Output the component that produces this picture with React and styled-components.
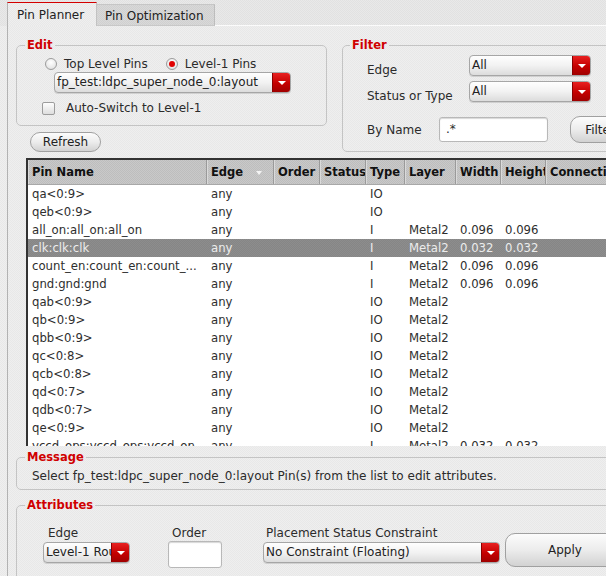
import React from "react";
import styled, { createGlobalStyle, css } from "styled-components";

const GlobalStyle = createGlobalStyle`
  html, body {
    margin: 0;
    padding: 0;
    overflow: hidden;
    background: #ececec;
  }
  body {
    font-family: "DejaVu Sans", "Noto Sans", sans-serif;
    font-size: 12px;
    color: #2b2b2b;
  }
  * {
    box-sizing: border-box;
  }
`;

// dithered background like the old X11 theme
const stipple = (a, b) => css`
  background-color: ${a};
  background-image: repeating-conic-gradient(${a} 0 25%, ${b} 0 50%);
  background-size: 2px 2px;
`;

const pins = [
  ["qa<0:9>", "any", "", "", "IO", "", "", ""],
  ["qeb<0:9>", "any", "", "", "IO", "", "", ""],
  ["all_on:all_on:all_on", "any", "", "", "I", "Metal2", "0.096", "0.096"],
  ["clk:clk:clk", "any", "", "", "I", "Metal2", "0.032", "0.032"],
  ["count_en:count_en:count_...", "any", "", "", "I", "Metal2", "0.096", "0.096"],
  ["gnd:gnd:gnd", "any", "", "", "I", "Metal2", "0.096", "0.096"],
  ["qab<0:9>", "any", "", "", "IO", "Metal2", "", ""],
  ["qb<0:9>", "any", "", "", "IO", "Metal2", "", ""],
  ["qbb<0:9>", "any", "", "", "IO", "Metal2", "", ""],
  ["qc<0:8>", "any", "", "", "IO", "Metal2", "", ""],
  ["qcb<0:8>", "any", "", "", "IO", "Metal2", "", ""],
  ["qd<0:7>", "any", "", "", "IO", "Metal2", "", ""],
  ["qdb<0:7>", "any", "", "", "IO", "Metal2", "", ""],
  ["qe<0:9>", "any", "", "", "IO", "Metal2", "", ""],
  ["vccd_ops:vccd_ops:vccd_on", "any", "", "", "I", "Metal2", "0.032", "0.032"],
];

const columns = ["Pin Name", "Edge", "Order", "Status", "Type", "Layer", "Width", "Height", "Connection"];
const colTemplate = "179px 67px 46px 46px 39px 51px 45px 45px 130px";

export default function App() {
  return (
    <>
      <GlobalStyle />
      <Frame>
        <TabBar>
          <Tab $active>Pin Planner</Tab>
          <Tab>Pin Optimization</Tab>
          <TabFiller />
        </TabBar>

        <Panel>
          <TopArea>
            <div>
              <Group $w={311}>
                <Legend>Edit</Legend>
                <RadioRow>
                  <Radio />
                  <span>Top Level Pins</span>
                  <Radio $checked style={{ marginLeft: 11 }} />
                  <span>Level-1 Pins</span>
                </RadioRow>
                <Combo $w={237} $ml={29}>
                  <ComboText>fp_test:ldpc_super_node_0:layout</ComboText>
                  <ComboArrow />
                </Combo>
                <CheckRow>
                  <Checkbox />
                  <span>Auto-Switch to Level-1</span>
                </CheckRow>
              </Group>
              <PillButton $w={71} $h={20} $ml={14} $mt={6}>
                Refresh
              </PillButton>
            </div>

            <FilterGroup $w={320}>
              <Legend>Filter</Legend>
              <FilterRow $h={21}>
                <FilterLabel $w={102} $top={8}>Edge</FilterLabel>
                <Combo $w={122}>
                  <ComboText>All</ComboText>
                  <ComboArrow />
                </Combo>
              </FilterRow>
              <FilterRow $h={21} $mt={5}>
                <FilterLabel $w={102} $top={8}>Status or Type</FilterLabel>
                <Combo $w={122}>
                  <ComboText>All</ComboText>
                  <ComboArrow />
                </Combo>
              </FilterRow>
              <FilterRow $h={27} $mt={14} $center>
                <FilterLabel $w={72} $top={1}>
                  By Name
                </FilterLabel>
                <TextBox $w={109} $h={25}>
                  .*
                </TextBox>
                <PillButton $w={60} $h={27} $ml={22}>
                  Filter
                </PillButton>
              </FilterRow>
            </FilterGroup>
          </TopArea>

          <TableWrap>
            <HeaderRow>
              {columns.map((c) => (
                <HeadCell key={c}>
                  {c}
                  {c === "Edge" && <SortArrow />}
                </HeadCell>
              ))}
            </HeaderRow>
            {pins.map((row, i) => (
              <Row key={i} $selected={i === 3}>
                {row.map((v, j) => (
                  <Cell key={j}>{v}</Cell>
                ))}
                <Cell />
              </Row>
            ))}
          </TableWrap>

          <Group $w={640} $mt={4} $pad="4px 8px 5px 8px">
            <Legend>Message</Legend>
            <MessageText>
              Select fp_test:ldpc_super_node_0:layout Pin(s) from the list to edit attributes.
            </MessageText>
          </Group>

          <Group $w={640} $mt={8} $pad="14px 8px 20px 8px">
            <Legend>Attributes</Legend>
            <AttrRow>
              <AttrField $ml={18}>
                <AttrLabel $indent={5}>Edge</AttrLabel>
                <Combo $w={87} $mt={1}>
                  <ComboText>Level-1 Route</ComboText>
                  <ComboArrow />
                </Combo>
              </AttrField>
              <AttrField $ml={38}>
                <AttrLabel $indent={4}>Order</AttrLabel>
                <TextBox $w={54} $h={27} />
              </AttrField>
              <AttrField $ml={41}>
                <AttrLabel $indent={3}>Placement Status Constraint</AttrLabel>
                <Combo $w={237} $mt={1}>
                  <ComboText>No Constraint (Floating)</ComboText>
                  <ComboArrow />
                </Combo>
              </AttrField>
              <PillButton $w={120} $h={34} $ml={5} $mt={7}>
                Apply
              </PillButton>
            </AttrRow>
          </Group>
        </Panel>
      </Frame>
    </>
  );
}

const Frame = styled.div`
  width: 680px;
  height: 576px;
  overflow: hidden;
  display: flex;
  flex-direction: column;
  ${stipple("#efefef", "#e8e8e8")}
`;

const TabBar = styled.div`
  display: flex;
  align-items: flex-end;
  height: 26px;
  padding-left: 7px;
  flex-shrink: 0;
  ${stipple("#e9e9e9", "#e1e1e1")}
`;

const Tab = styled.div`
  display: flex;
  align-items: center;
  white-space: nowrap;
  color: #222;
  ${(p) =>
    p.$active
      ? css`
          width: 90px;
          height: 24px;
          padding: 0 0 0 9px;
          border-left: 1px solid #b4b4b4;
          border-right: 1px solid #c2c2c2;
          border-top: 1px solid #d40000;
          ${stipple("#efefef", "#e8e8e8")}
        `
      : css`
          width: 118px;
          height: 22px;
          padding: 1px 0 0 8px;
          border-top: 1px solid #c6c6c6;
          border-right: 1px solid #bdbdbd;
          border-bottom: 1px solid #c8c8c8;
          ${stipple("#d9d9d9", "#d0d0d0")}
        `}
`;

const TabFiller = styled.div`
  flex: 1;
  height: 1px;
  background: #fbfbfb;
`;

const Panel = styled.div`
  flex: 1;
  margin-left: 7px;
  border-left: 1px solid #b2b2b2;
  padding-left: 8px;
  display: flex;
  flex-direction: column;
`;

const TopArea = styled.div`
  display: flex;
  align-items: flex-start;
  margin-top: 12px;
`;

const Group = styled.fieldset`
  margin: ${(p) => p.$mt || 0}px 0 0 0;
  padding: ${(p) => p.$pad || "4px 8px 10px 8px"};
  width: ${(p) => p.$w}px;
  min-width: 0;
  flex-shrink: 0;
  border: 1px solid #c4c4c4;
  border-radius: 5px;
  display: flex;
  flex-direction: column;
  align-items: flex-start;
`;

const FilterGroup = styled(Group)`
  margin-left: 15px;
  padding: 3px 8px 8px 7px;
`;

const Legend = styled.legend`
  padding: 0 2px;
  font-size: 11.5px;
  line-height: 14px;
  font-weight: bold;
  color: #d00000;
`;

const RadioRow = styled.div`
  display: flex;
  align-items: center;
  height: 16px;
  margin-left: 20px;
  gap: 7px;
`;

const Radio = styled.span`
  width: 12px;
  height: 12px;
  border-radius: 50%;
  border: 1px solid #9c9c9c;
  background: radial-gradient(circle at 50% 35%, #ffffff 0, #e6e6e6 70%, #cfcfcf 100%);
  display: flex;
  align-items: center;
  justify-content: center;
  &::after {
    content: "";
    display: ${(p) => (p.$checked ? "block" : "none")};
    width: 6px;
    height: 6px;
    border-radius: 50%;
    background: #e00000;
  }
`;

const CheckRow = styled.div`
  display: flex;
  align-items: center;
  height: 14px;
  margin: 8px 0 0 17px;
  gap: 11px;
`;

const Checkbox = styled.span`
  width: 13px;
  height: 13px;
  border: 1px solid #9c9c9c;
  border-radius: 2px;
  background: linear-gradient(#fdfdfd, #dedede);
`;

const Combo = styled.div`
  display: flex;
  width: ${(p) => p.$w}px;
  height: ${(p) => p.$h || 21}px;
  margin: ${(p) => p.$mt || 0}px 0 0 ${(p) => p.$ml || 0}px;
  border: 1px solid #a6a6a6;
  border-radius: 4px;
  overflow: hidden;
  background: linear-gradient(#fefefe, #f2f2f2 50%, #dcdcdc);
  box-shadow: 0 1px 0 #d0d0d0;
  flex-shrink: 0;
`;

const ComboText = styled.span`
  flex: 1;
  min-width: 0;
  padding: 0 2px;
  line-height: 19px;
  white-space: nowrap;
  overflow: hidden;
  color: #222;
`;

const ComboArrow = styled.span`
  width: 18px;
  flex-shrink: 0;
  display: flex;
  align-items: center;
  justify-content: center;
  border-left: 1px solid #8a0000;
  background: linear-gradient(#e82020, #c40000 55%, #a00000);
  &::after {
    content: "";
    border-left: 4px solid transparent;
    border-right: 4px solid transparent;
    border-top: 4px solid #ffffff;
  }
`;

const PillButton = styled.div`
  display: flex;
  align-items: center;
  justify-content: center;
  width: ${(p) => p.$w}px;
  height: ${(p) => p.$h}px;
  margin: ${(p) => p.$mt || 0}px 0 0 ${(p) => p.$ml || 0}px;
  border: 1px solid #a0a0a0;
  border-radius: ${(p) => Math.min(p.$h / 2, 10)}px;
  background: linear-gradient(#fcfcfc, #ececec 50%, #d2d2d2);
  color: #222;
  flex-shrink: 0;
  white-space: nowrap;
`;

const FilterRow = styled.div`
  display: flex;
  align-items: ${(p) => (p.$center ? "center" : "flex-start")};
  height: ${(p) => p.$h}px;
  margin-top: ${(p) => p.$mt || 0}px;
  padding-left: 17px;
`;

const FilterLabel = styled.span`
  width: ${(p) => p.$w}px;
  flex-shrink: 0;
  line-height: 15px;
  padding-top: ${(p) => p.$top}px;
`;

const TextBox = styled.div`
  width: ${(p) => p.$w}px;
  height: ${(p) => p.$h}px;
  border: 1px solid #b8b8b8;
  border-radius: 3px;
  background: #ffffff;
  box-shadow: inset 0 1px 1px #d8d8d8;
  padding: 0 6px;
  line-height: 23px;
  flex-shrink: 0;
`;

const TableWrap = styled.div`
  margin: 6px 0 0 10px;
  height: 288px;
  width: 640px;
  flex-shrink: 0;
  overflow: hidden;
  border-top: 2px solid #333333;
  border-left: 2px solid #333333;
  background: #ffffff;
`;

const HeaderRow = styled.div`
  display: grid;
  grid-template-columns: ${colTemplate};
  height: 25px;
  border-bottom: 1px solid #a8a8a8;
  ${stipple("#c9c9c9", "#bdbdbd")}
`;

const HeadCell = styled.div`
  position: relative;
  display: flex;
  align-items: center;
  padding-left: 3px;
  font-weight: bold;
  font-size: 11.5px;
  color: #111;
  white-space: nowrap;
  overflow: hidden;
  border-right: 1px solid #9a9a9a;
  border-left: 1px solid #dadada;
`;

const SortArrow = styled.span`
  position: absolute;
  right: 11px;
  top: 11px;
  border-left: 3px solid transparent;
  border-right: 3px solid transparent;
  border-top: 4px solid #f4f4f4;
`;

const Row = styled.div`
  display: grid;
  grid-template-columns: ${colTemplate};
  height: 18px;
  color: ${(p) => (p.$selected ? "#ececec" : "#2e2e2e")};
  ${(p) => (p.$selected ? stipple("#8d8d8d", "#868686") : "")}
`;

const Cell = styled.div`
  padding-left: 4px;
  line-height: 18px;
  font-size: 11.7px;
  white-space: nowrap;
  overflow: hidden;
`;

const MessageText = styled.div`
  margin-left: 7px;
  line-height: 16px;
`;

const AttrRow = styled.div`
  display: flex;
  align-items: flex-start;
`;

const AttrField = styled.div`
  display: flex;
  flex-direction: column;
  align-items: flex-start;
  margin-left: ${(p) => p.$ml}px;
`;

const AttrLabel = styled.span`
  line-height: 15px;
  padding-left: ${(p) => p.$indent}px;
  white-space: nowrap;
`;
